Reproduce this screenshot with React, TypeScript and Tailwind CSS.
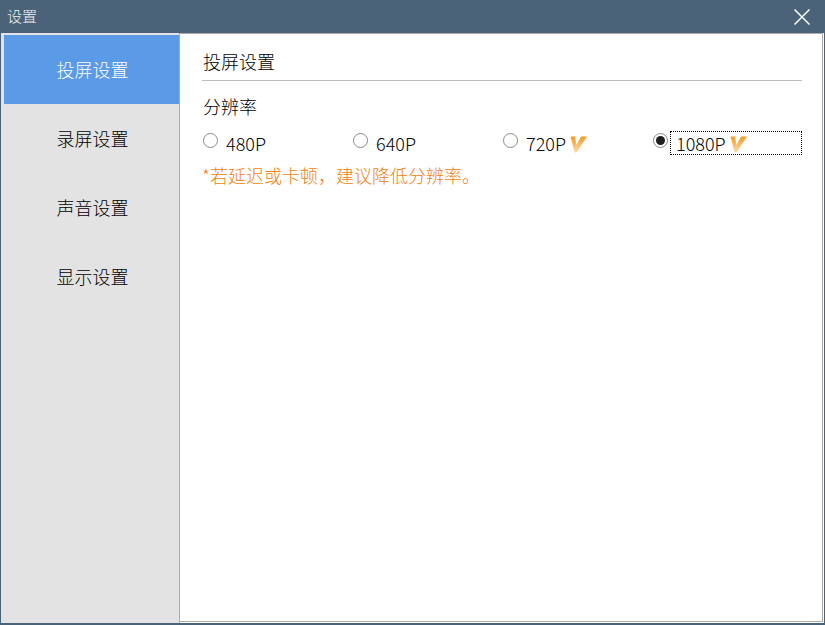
const font = { fontFamily: '"Noto Sans CJK SC", "Open Sans", sans-serif' }

const menu = ['投屏设置', '录屏设置', '声音设置', '显示设置']

function VipMark() {
  return (
    <svg width="17" height="17" viewBox="0 0 17 17" className="block shrink-0">
      <defs>
        <linearGradient id="vip" x1="0" y1="0" x2="0" y2="1">
          <stop offset="0" stopColor="#f59a1f" />
          <stop offset="1" stopColor="#fcdcae" />
        </linearGradient>
      </defs>
      <path d="M0.5 0.5 H5 L6.5 9 L11 0.5 H17 L6.5 16.5 H4.5 Z" fill="url(#vip)" />
    </svg>
  )
}

function Radio({ checked }: { checked?: boolean }) {
  return (
    <span className="mt-[-5px] flex h-[15px] w-[15px] shrink-0 items-center justify-center rounded-full border border-[#8a8a8a] bg-white">
      {checked && <span className="h-[9px] w-[9px] rounded-full bg-[#1f1f1f]" />}
    </span>
  )
}

function Option({ label, vip, checked }: { label: string; vip?: boolean; checked?: boolean }) {
  return (
    <div className="flex h-[24px] items-center">
      <Radio checked={checked} />
      <div
        className={
          checked
            ? 'ml-[2px] flex h-[24px] w-[132px] items-center border border-dotted border-black pl-[5px]'
            : 'ml-[8px] flex h-[24px] items-center'
        }
      >
        <span className="text-[18px] leading-[24px] font-light text-black">{label}</span>
        {vip && <span className="mt-[3px] ml-[4px]"><VipMark /></span>}
      </div>
    </div>
  )
}

export default function App() {
  return (
    <div className="flex h-[625px] w-[825px] flex-col overflow-hidden bg-[#4a6378]" style={font}>
      <div className="flex h-[33px] shrink-0 items-center justify-between pr-[15px] pl-[7px]">
        <span className="text-[15px] font-light text-[#f2f2f2]">设置</span>
        <svg width="16" height="16" viewBox="0 0 16 16" fill="none" stroke="#ffffff" strokeWidth="1.5">
          <path d="M0.5 0.5 L15.5 15.5 M15.5 0.5 L0.5 15.5" />
        </svg>
      </div>

      <div className="mr-[1px] mb-[2px] ml-[1px] flex min-h-0 flex-1 bg-white">
        <div className="w-[179px] shrink-0 border-r border-[#aaaaaa] bg-[#e3e3e3] pt-[2px] pl-[3px]">
          {menu.map((m, i) => (
            <div
              key={m}
              className={
                i === 0
                  ? 'flex h-[69px] items-center justify-center bg-[#5a9ae6] pl-[2px] text-[18px] font-light text-white'
                  : 'flex h-[69px] items-center justify-center pl-[2px] text-[18px] font-light text-black'
              }
            >
              {m}
            </div>
          ))}
        </div>

        <div className="mr-[1px] mb-[1px] flex-1 border-t border-r border-b border-[#aaaaaa] bg-white pt-[15px] pr-[20px] pl-[22px]">
          <div className="h-[32px] border-b border-[#bdbdbd] pl-px text-[18px] leading-[24px] font-light text-black">投屏设置</div>
          <div className="mt-[13px] pl-px text-[18px] leading-[24px] font-light text-black">分辨率</div>
          <div className="mt-[13px] grid grid-cols-[150px_150px_150px_1fr] pl-px">
            <Option label="480P" />
            <Option label="640P" />
            <Option label="720P" vip />
            <Option label="1080P" vip checked />
          </div>
          <div className="mt-[8px] text-[18px] leading-[24px] font-light whitespace-nowrap text-[#ee8210]">*若延迟或卡顿，建议降低分辨率。</div>
        </div>
      </div>
    </div>
  )
}
